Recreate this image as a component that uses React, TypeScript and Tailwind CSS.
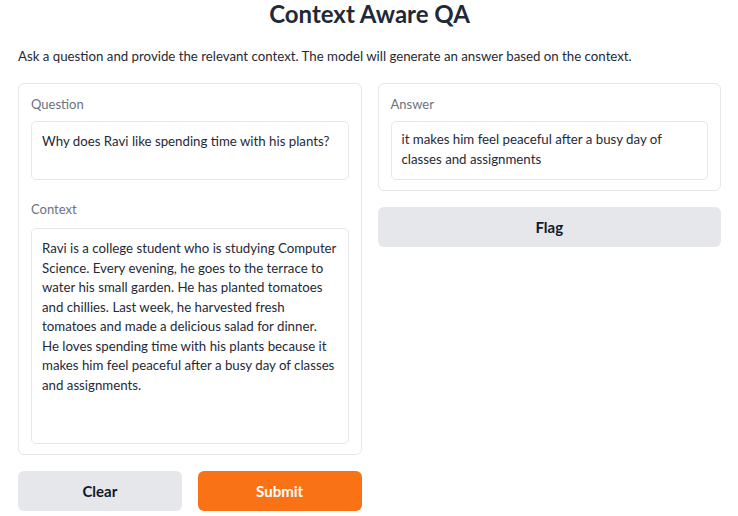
const contextLines = [
  "Ravi is a college student who is studying Computer",
  "Science. Every evening, he goes to the terrace to",
  "water his small garden. He has planted tomatoes",
  "and chillies. Last week, he harvested fresh",
  "tomatoes and made a delicious salad for dinner.",
  "He loves spending time with his plants because it",
  "makes him feel peaceful after a busy day of classes",
  "and assignments.",
];

function Label({ children }: { children: React.ReactNode }) {
  return <div className="text-[13px] leading-4 text-[#6b7280]">{children}</div>;
}

function Box({ lines, className }: { lines: string[]; className: string }) {
  return (
    <div
      className={`rounded-[5px] border border-[#e5e7eb] bg-white px-[10px] text-[13.25px] leading-[19.5px] text-[#1f2937] ${className}`}
    >
      {lines.map((l) => (
        <div key={l} className="whitespace-nowrap">
          {l}
        </div>
      ))}
    </div>
  );
}

export default function App() {
  return (
    <div className="min-h-[516px] bg-white pl-[18px] pr-[17px] font-['Lato','Noto_Sans',sans-serif]">
      <h1 className="text-center text-[24px] font-bold leading-[28px] text-[#1f2937]">Context Aware QA</h1>
      <p className="mt-[18px] text-[13.25px] leading-5 text-[#1f2937]">
        Ask a question and provide the relevant context. The model will generate an answer based on the context.
      </p>

      <div className="mt-[17px] grid grid-cols-2 gap-4">
        <div className="flex flex-col gap-4">
          <div className="rounded-md border border-[#e5e7eb] px-3 pt-3 pb-[10px]">
            <Label>Question</Label>
            <Box lines={["Why does Ravi like spending time with his plants?"]} className="mt-[9px] h-[59px] pt-[10px]" />
            <div className="mt-[21px]">
              <Label>Context</Label>
            </div>
            <Box lines={contextLines} className="mt-[11px] h-[216px] pt-[10px]" />
          </div>
          <div className="grid grid-cols-2 gap-4">
            <button className="h-10 rounded-md bg-[#e5e7eb] text-[15px] font-bold text-[#111827]">Clear</button>
            <button className="h-10 rounded-md bg-[#f97316] text-[15px] font-bold text-white">Submit</button>
          </div>
        </div>

        <div className="flex flex-col gap-4">
          <div className="rounded-md border border-[#e5e7eb] px-3 pt-3 pb-[10px]">
            <Label>Answer</Label>
            <Box
              lines={["it makes him feel peaceful after a busy day of", "classes and assignments"]}
              className="mt-[9px] h-[59px] pt-[8px]"
            />
          </div>
          <button className="h-10 rounded-md bg-[#e5e7eb] text-[15px] font-bold text-[#111827]">Flag</button>
        </div>
      </div>
    </div>
  );
}
